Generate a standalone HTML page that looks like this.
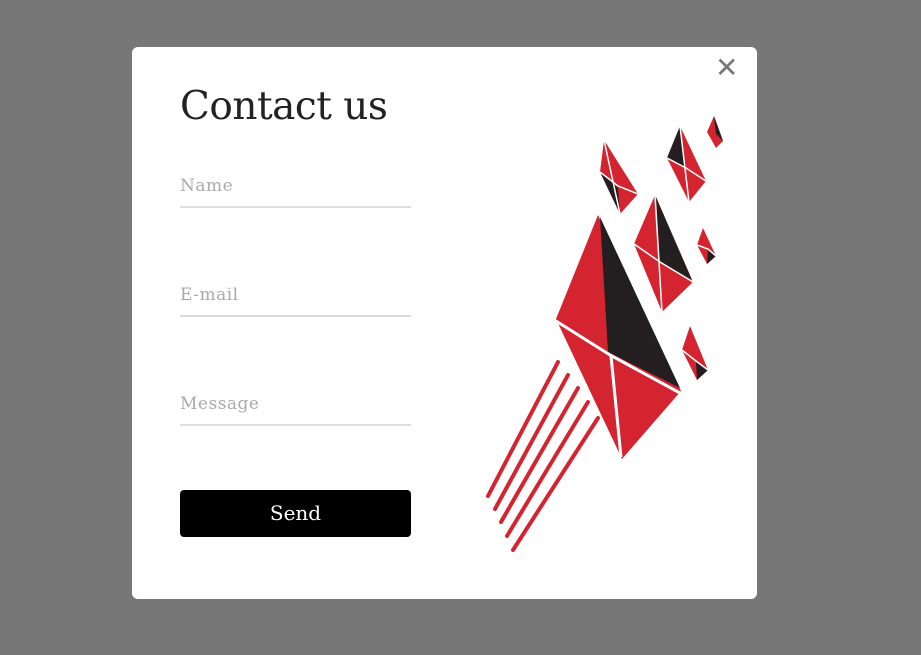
<!DOCTYPE html>
<html><head><style>
body{margin:0;width:921px;height:655px;background:#777;position:relative;overflow:hidden;font-family:"DejaVu Serif","Liberation Serif",serif}
.m{position:absolute;left:132px;top:47px;width:625px;height:552px;background:#fff;border-radius:6px}
h1{position:absolute;left:48px;top:37px;margin:0;font-weight:normal;font-size:39px;color:#222;letter-spacing:-0.5px}
.f{position:absolute;left:48px;width:231px;border-bottom:2px solid #ddd;height:30px;color:#aaa;font-size:17px;letter-spacing:0.5px}
.b{position:absolute;left:48px;top:443px;width:231px;height:47px;background:#000;border-radius:4px;color:#fff;font-size:20px;text-align:center;line-height:46px}
.x{position:absolute;left:583px;top:4px;font-size:28px;color:#777;font-family:"DejaVu Sans",sans-serif}
</style></head><body>
<div class="m">
<h1>Contact us</h1>
<div class="f" style="top:129px">Name</div>
<div class="f" style="top:238px">E-mail</div>
<div class="f" style="top:347px">Message</div>
<div class="b">Send</div>
<div class="x">✕</div>
</div>
<svg style="position:absolute;left:0;top:0" width="921" height="655">
<g stroke="#d42430" stroke-width="4" stroke-linecap="round">
<line x1="558" y1="362" x2="488" y2="496"/>
<line x1="568" y1="375" x2="495" y2="509"/>
<line x1="578" y1="388" x2="501" y2="522"/>
<line x1="588" y1="402" x2="507" y2="536"/>
<line x1="598" y1="418" x2="513" y2="550"/>
</g>
<polygon points="598,215 556,319 622,459 681,391" fill="#d42430"/>
<polygon points="600,217 608,352 680,388" fill="#231f20"/>
<polyline points="556,321 610,355 680,393" fill="none" stroke="#fff" stroke-width="3"/>
<line x1="611" y1="356" x2="621" y2="457" stroke="#fff" stroke-width="3"/>
<g>
<polygon points="604,140 600,172 620,214 638,194" fill="#d42430"/>
<polygon points="600,172 620,214 618,188" fill="#231f20"/>
<polygon points="680,126 667,158 689,202 706,181" fill="#d42430"/>
<polygon points="680,126 667,158 686,168" fill="#231f20"/>
<polygon points="655,195 634,244 662,312 693,282" fill="#d42430"/>
<polygon points="656,197 660,262 692,280" fill="#231f20"/>
<polygon points="714,116 707,132 716,148 723,141" fill="#d42430"/>
<polygon points="714,116 716,134 723,141" fill="#231f20"/>
<polygon points="703,228 697,245 707,264 716,256" fill="#d42430"/>
<polygon points="707,264 716,256 708,248" fill="#231f20"/>
<polygon points="690,326 682,350 697,380 708,370" fill="#d42430"/>
<polygon points="697,380 708,370 696,362" fill="#231f20"/>
</g>
<g stroke="#fff" stroke-width="1.5" fill="none">
<polyline points="600,172 618,186 638,194"/><line x1="604" y1="140" x2="620" y2="214"/>
<polyline points="667,158 686,168 706,181"/><line x1="680" y1="126" x2="689" y2="202"/>
<polyline points="634,244 660,262 693,282"/><line x1="655" y1="195" x2="662" y2="312"/>
<polyline points="697,245 708,249 716,256"/>
<polyline points="682,350 696,361 708,370"/>
</g>
</svg>
</body></html>
